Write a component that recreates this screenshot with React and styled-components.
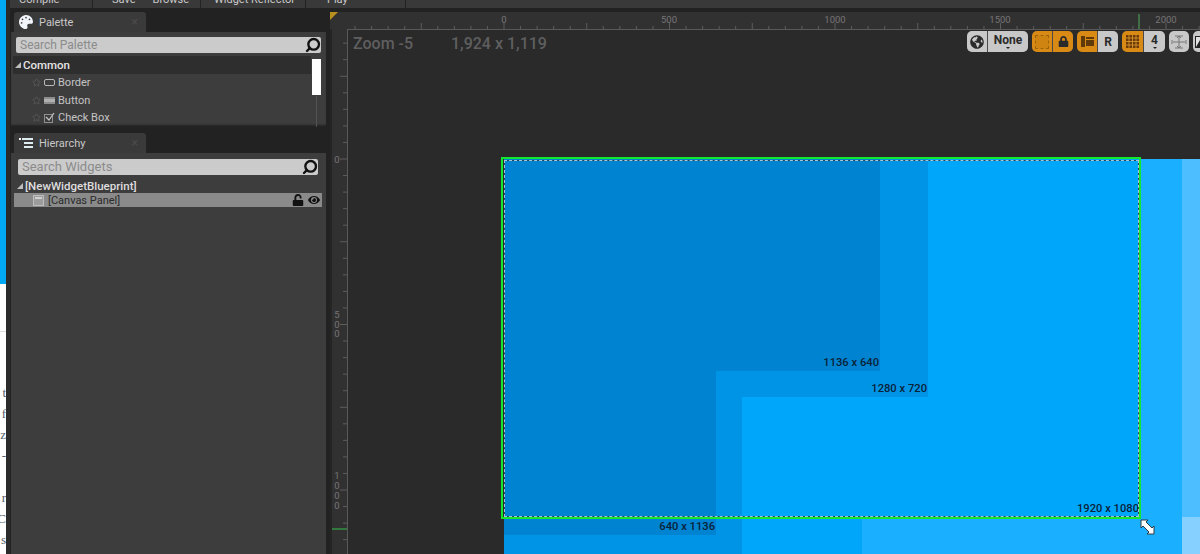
import React from 'react';
import styled, { createGlobalStyle } from 'styled-components';
import { FaGlobeAmericas, FaLock, FaUnlock, FaEye, FaPalette } from 'react-icons/fa';
import { Search, Star } from 'lucide-react';

const GlobalStyle = createGlobalStyle`
  html, body {
    margin: 0;
    height: 100%;
    background: #232223;
    overflow: hidden;
  }
  #root {
    height: 100%;
  }
`;

const Screen = styled.div`
  width: 1200px;
  height: 554px;
  display: flex;
  overflow: hidden;
  font-family: Roboto, "Liberation Sans", sans-serif;
`;

const Backdrop = styled.div`
  width: 6px;
  flex: none;
  display: flex;
  flex-direction: column;
  overflow: hidden;
  background: #fff;
`;

const BackdropTop = styled.div`
  height: 284px;
  flex: none;
  background: #00a9f4;
`;

const BackdropRule = styled.div`
  height: 1px;
  flex: none;
  margin-top: 47px;
  background: #dedede;
`;

const BackdropText = styled.div`
  padding-top: 54px;
  margin-left: -6px;
  display: flex;
  flex-direction: column;
  gap: 8px;
  font: 13px/13px "Liberation Serif", serif;
  color: #55606a;
  text-align: right;
  width: 12px;
`;

const Editor = styled.div`
  flex: 1;
  min-width: 0;
  display: flex;
  flex-direction: column;
  background: #232223;
  border-left: 4px solid #2b2b2b;
`;

const MenuBar = styled.div`
  height: 8px;
  flex: none;
  display: flex;
  overflow: hidden;
  background: #3a393a;
  margin-bottom: 4px;
`;

const MenuItem = styled.div`
  width: ${p => p.$w}px;
  flex: none;
  height: 14px;
  margin-top: -6px;
  display: flex;
  gap: ${p => p.$gap || 0}px;
  padding-left: ${p => p.$pad}px;
  box-sizing: border-box;
  border-right: 1px solid #242324;
  font-size: 11px;
  line-height: 11px;
  white-space: nowrap;
  color: #c9c9c9;
`;

const Workspace = styled.div`
  flex: 1;
  min-height: 0;
  display: flex;
`;

const Sidebar = styled.div`
  width: 320px;
  flex: none;
  display: flex;
  flex-direction: column;
  gap: 6px;
  padding-left: 1px;
  box-sizing: border-box;
`;

const Dock = styled.section`
  width: 315px;
  display: flex;
  flex-direction: column;
  flex: ${p => (p.$grow ? 1 : 'none')};
  min-height: 0;
`;

const Tab = styled.div`
  width: 132px;
  height: 20px;
  margin-left: 3px;
  flex: none;
  box-sizing: border-box;
  padding: 0 8px 0 5px;
  display: flex;
  align-items: center;
  gap: 6px;
  background: #3b3a3b;
  border-radius: 3px 3px 0 0;
  color: #c8c8c8;
  font-size: 11px;
`;

const TabClose = styled.span`
  margin-left: auto;
  color: #4c4b4c;
  font-size: 12px;
`;

const DockBody = styled.div`
  flex: ${p => (p.$grow ? 1 : 'none')};
  height: ${p => (p.$grow ? 'auto' : '95px')};
  min-height: 0;
  background: #3e3d3e;
  box-sizing: border-box;
  padding: ${p => p.$pad};
  box-shadow: inset 0 -3px 2px -1px ${p => (p.$grow ? 'transparent' : '#232223')};
`;

const SearchBox = styled.div`
  height: 16px;
  box-sizing: border-box;
  display: flex;
  align-items: center;
  justify-content: space-between;
  padding: 0 0 0 4px;
  margin: ${p => p.$margin};
  border-radius: 2px;
  background: #cbcbcb;
  color: #8b8b8b;
  font-size: ${p => p.$size}px;
`;

const SearchLabel = styled.span`
  padding-bottom: 1px;
`;

const SearchIcon = styled(Search)`
  width: 16px;
  height: 16px;
  color: #111;
  transform: scaleX(-1);
`;

const PaletteList = styled.div`
  position: relative;
  margin-top: 3px;
`;

const ScrollThumb = styled.div`
  position: absolute;
  top: 3px;
  left: 301px;
  width: 9px;
  height: 36px;
  background: #fff;
`;

const ScrollTrack = styled.div`
  position: absolute;
  top: 40px;
  left: 305px;
  bottom: 0;
  width: 1px;
  background: #545354;
`;

const CategoryRow = styled.div`
  width: 298px;
  height: 18px;
  margin-left: 2px;
  display: flex;
  align-items: center;
  gap: 2px;
  padding: 0 0 1px 2px;
  box-sizing: border-box;
  background: #2f2e2f;
  color: #e4e4e4;
  font-size: 11.5px;
  font-weight: 500;
`;

const Caret = styled.span`
  width: 0;
  height: 0;
  border-left: 6px solid transparent;
  border-bottom: 6px solid #bdbdbd;
`;

const WidgetRow = styled.div`
  height: 17.6px;
  padding-left: 21px;
  display: flex;
  align-items: center;
  gap: 3px;
  color: #c4c4c4;
  font-size: 11px;
`;

const FavStar = styled(Star)`
  width: 9px;
  height: 9px;
  color: #5e5d5e;
`;

const TreeRoot = styled.div`
  height: 14px;
  margin: 4px 0 0 6px;
  display: flex;
  align-items: center;
  gap: 2px;
  color: #dedede;
  font-size: 11.5px;
  font-weight: 500;
`;

const TreeRow = styled.div`
  height: 14px;
  margin: 0 4px 0 3px;
  padding: 0 2px 0 19px;
  display: flex;
  align-items: center;
  gap: 4px;
  background: #8a8a8a;
  color: #2b2b2b;
  font-size: 11px;
`;

const RowIcons = styled.span`
  margin-left: auto;
  display: flex;
  align-items: center;
  gap: 4px;
  color: #111;
  font-size: 12px;
`;

const Viewport = styled.div`
  flex: 1;
  min-width: 0;
  display: flex;
  flex-direction: column;
`;

const TopRuler = styled.svg`
  display: block;
  width: 100%;
  height: 17px;
  flex: none;
  background: #323132;
`;

const ViewportBody = styled.div`
  flex: 1;
  min-height: 0;
  display: flex;
`;

const SideRuler = styled.svg`
  display: block;
  width: 17px;
  height: 100%;
  flex: none;
  background: #323132;
  border-left: 2px solid #262526;
  box-sizing: border-box;
`;

const Canvas = styled.div`
  flex: 1;
  min-width: 0;
  position: relative;
  overflow: hidden;
  background: #2a2a2b;
  box-shadow: inset 1px 1px 0 #5a595a;
`;

const Zone = styled.div`
  position: absolute;
  left: 157px;
  top: 130px;
  width: ${p => p.$w};
  height: ${p => p.$h};
  background: ${p => p.$color};
`;

const ZoneLabel = styled.span`
  position: absolute;
  right: 1px;
  bottom: 1px;
  color: #0b2238;
  font-size: 11.2px;
  line-height: 14px;
  font-weight: 500;
  white-space: nowrap;
`;

const Selection = styled.div`
  position: absolute;
  left: 154px;
  top: 128px;
  width: 640px;
  height: 362px;
  box-sizing: border-box;
  border: 2px solid #14e82e;
  pointer-events: none;
`;

const DashFrame = styled.div`
  position: absolute;
  inset: 1px 0 0 1px;
  border: 1px solid #1e4660;

  &::after {
    content: '';
    position: absolute;
    inset: -1px;
    border: 1px dashed #a5c6d2;
  }
`;

const ResizeHandle = styled.svg`
  position: absolute;
  left: 793px;
  top: 490px;
  width: 17px;
  height: 17px;
`;

const Overlay = styled.div`
  position: absolute;
  top: 2px;
  left: 6px;
  right: -13px;
  display: flex;
  align-items: flex-start;
`;

const Readout = styled.div`
  width: ${p => p.$w}px;
  flex: none;
  padding-top: 3px;
  color: #5f5f5f;
  font-size: 16px;
  font-weight: 500;
  white-space: nowrap;
`;

const Toolbar = styled.div`
  margin-left: auto;
  display: flex;
  gap: 4px;
`;

const ToolGroup = styled.div`
  display: flex;
  gap: ${p => p.$gap || 1}px;
  border-radius: 5px;
  overflow: hidden;
  background: #4a4a4a;
`;

const ToolButton = styled.div`
  width: ${p => p.$w || 20}px;
  height: 21px;
  flex: none;
  display: flex;
  flex-direction: column;
  align-items: center;
  justify-content: center;
  background: ${p => (p.$on ? '#d88a14' : '#c8c8c8')};
  color: #2a2a2a;
  font-size: ${p => p.$size || 12}px;
  font-weight: 700;
  line-height: 12px;
`;

const DropCaret = styled.span`
  width: 0;
  height: 0;
  margin-top: 1px;
  border-left: 2px solid transparent;
  border-right: 2px solid transparent;
  border-top: 2px solid #222;
`;

const DashedSquare = styled.span`
  width: 12px;
  height: 12px;
  border: 1px dashed #9c640c;
  background: #cf8412;
`;

const RulerText = styled.text`
  fill: #767576;
  font-size: 9.5px;
  font-family: Roboto, sans-serif;
  text-anchor: middle;
`;

const zones = [
  { w: '100%', h: '100%', color: '#86d0ff' },
  { w: '100%', h: '358px', color: '#4dbeff' },
  { w: '678px', h: '100%', color: '#1ab0ff' },
  { w: '358px', h: '100%', color: '#00a6fa' },
  { w: '636px', h: '358px', color: '#00a6fa', label: '1920 x 1080' },
  { w: '238px', h: '100%', color: '#0094e6' },
  { w: '424px', h: '238px', color: '#0094e6', label: '1280 x 720' },
  { w: '212px', h: '376px', color: '#0083d0', label: '640 x 1136' },
  { w: '376px', h: '212px', color: '#0083d0', label: '1136 x 640' },
];

const TICK = 16.55;

const HorizontalTicks = () => {
  const ticks = [];
  for (let i = -9; i < 54; i++) {
    const x = 174 + i * TICK;
    const major = i % 5 === 0;
    ticks.push(<line key={i} x1={x} x2={x} y1={major ? 11 : 14} y2={17} stroke="#5e5d5e" />);
  }
  return ticks;
};

const VerticalTicks = () => {
  const ticks = [];
  for (let i = -7; i < 24; i++) {
    const y = 130 + i * TICK;
    const major = i % 5 === 0;
    ticks.push(<line key={i} x1={major ? 8 : 11} x2={15} y1={y} y2={y} stroke="#5e5d5e" />);
  }
  return ticks;
};

const sideLabels = [
  { y: 134, chars: '0' },
  { y: 289, chars: '5' },
  { y: 299, chars: '0' },
  { y: 308, chars: '0' },
  { y: 450, chars: '1' },
  { y: 460, chars: '0' },
  { y: 470, chars: '0' },
  { y: 480, chars: '0' },
];

const topLabels = [
  { x: 174, text: '0' },
  { x: 339, text: '500' },
  { x: 505, text: '1000' },
  { x: 670, text: '1500' },
  { x: 836, text: '2000' },
];

const HierarchyIcon = () => (
  <svg width="14" height="12" viewBox="0 0 14 12">
    <rect x="0" y="1" width="2" height="2" fill="#fff" />
    <rect x="3" y="1" width="11" height="2" fill="#dcecf0" />
    <rect x="5" y="5" width="9" height="2" fill="#dcecf0" />
    <rect x="5" y="9" width="9" height="2" fill="#dcecf0" />
  </svg>
);

const BorderIcon = () => (
  <svg width="11" height="7" viewBox="0 0 11 7">
    <rect x="0.5" y="0.5" width="10" height="6" rx="1.5" fill="none" stroke="#b8b8b8" />
  </svg>
);

const ButtonIcon = () => (
  <svg width="11" height="7" viewBox="0 0 11 7">
    <rect width="11" height="7" fill="#8d8d8d" />
    <rect y="2" width="11" height="3" fill="#b0b0b0" />
  </svg>
);

const CheckIcon = () => (
  <svg width="11" height="11" viewBox="0 0 11 11">
    <rect x="0.5" y="2.5" width="8" height="8" fill="none" stroke="#8f8f8f" />
    <path d="M2 5 L5 8 L10 1" fill="none" stroke="#c4c4c4" strokeWidth="1.2" />
  </svg>
);

const CanvasPanelIcon = () => (
  <svg width="11" height="11" viewBox="0 0 11 11">
    <rect x="0.5" y="0.5" width="10" height="10" fill="#9c9c9c" stroke="#bdbdbd" />
    <rect x="2" y="2" width="7" height="2" fill="#d0d0d0" />
  </svg>
);

const TransformIcon = () => (
  <svg width="16" height="14" viewBox="0 0 16 14">
    <path d="M8 1 V13 M2 7 H14 M4 1 H12 M4 13 H12 M1 5 V9 M15 5 V9 M6 3 L8 1 L10 3 M6 11 L8 13 L10 11" fill="none" stroke="#777" strokeWidth="1" />
  </svg>
);

const ImageIcon = () => (
  <svg width="16" height="12" viewBox="0 0 16 12">
    <rect x="0.5" y="0.5" width="15" height="11" fill="#e2e2e2" stroke="#222" />
    <path d="M1 11 L5 4 L8 8 L11 5 L15 10 V11 Z" fill="#222" />
  </svg>
);

const GridIcon = () => (
  <svg width="13" height="13" viewBox="0 0 13 13">
    <rect width="13" height="13" fill="#6d3a05" />
    <path d="M3 0 V13 M6.5 0 V13 M10 0 V13 M0 3 H13 M0 6.5 H13 M0 10 H13" stroke="#e09a30" strokeWidth="0.8" />
  </svg>
);

const LayoutIcon = () => (
  <svg width="13" height="11" viewBox="0 0 13 11">
    <rect width="4" height="11" fill="#5f3a08" />
    <rect x="5" y="1" width="8" height="2" fill="#5f3a08" />
    <rect x="5" y="4" width="8" height="6" fill="#5f3a08" />
  </svg>
);

const App = () => (
  <Screen>
    <GlobalStyle />
    <Backdrop>
      <BackdropTop />
      <BackdropRule />
      <BackdropText>
        <span>t</span>
        <span>f</span>
        <span>z</span>
        <span>-</span>
        <span>&nbsp;</span>
        <span>r</span>
        <span>C</span>
        <span>s</span>
      </BackdropText>
    </Backdrop>
    <Editor>
      <MenuBar>
        <MenuItem $w={83} $pad={9}>Compile</MenuItem>
        <MenuItem $w={108} $pad={19} $gap={17}><span>Save</span><span>Browse</span></MenuItem>
        <MenuItem $w={105} $pad={13}>Widget Reflector</MenuItem>
        <MenuItem $w={100} $pad={21}>Play</MenuItem>
      </MenuBar>
      <Workspace>
        <Sidebar>
          <Dock>
            <Tab>
              <FaPalette size={14} color="#f2f5fa" />
              Palette
              <TabClose>×</TabClose>
            </Tab>
            <DockBody $pad="5px 0 0 0">
              <SearchBox $size={12} $margin="0 5px 0 5px">
                <SearchLabel>Search Palette</SearchLabel>
                <SearchIcon strokeWidth={3.5} />
              </SearchBox>
              <PaletteList>
                <ScrollThumb />
                <ScrollTrack />
                <CategoryRow>
                  <Caret />
                  Common
                </CategoryRow>
                <WidgetRow><FavStar /><BorderIcon />Border</WidgetRow>
                <WidgetRow><FavStar /><ButtonIcon />Button</WidgetRow>
                <WidgetRow><FavStar /><CheckIcon />Check Box</WidgetRow>
              </PaletteList>
            </DockBody>
          </Dock>
          <Dock $grow>
            <Tab>
              <HierarchyIcon />
              Hierarchy
              <TabClose>×</TabClose>
            </Tab>
            <DockBody $grow $pad="6px 0 0 0">
              <SearchBox $size={13} $margin="0 8px 0 7px">
                <SearchLabel>Search Widgets</SearchLabel>
                <SearchIcon strokeWidth={3.5} />
              </SearchBox>
              <TreeRoot>
                <Caret />
                [NewWidgetBlueprint]
              </TreeRoot>
              <TreeRow>
                <CanvasPanelIcon />
                [Canvas Panel]
                <RowIcons><FaUnlock /><FaEye /></RowIcons>
              </TreeRow>
            </DockBody>
          </Dock>
        </Sidebar>
        <Viewport>
          <TopRuler>
            <path d="M0 0 H8 L0 8 Z" fill="#b8901f" />
            <HorizontalTicks />
            {topLabels.map(l => (
              <RulerText key={l.text} x={l.x} y={11}>{l.text}</RulerText>
            ))}
            <line x1={809} x2={809} y1={2} y2={17} stroke="#4fae5c" />
          </TopRuler>
          <ViewportBody>
            <SideRuler>
              <VerticalTicks />
              {sideLabels.map(l => (
                <RulerText key={l.y} x={5} y={l.y}>{l.chars}</RulerText>
              ))}
              <line x1={0} x2={15} y1={500} y2={500} stroke="#35c24a" />
            </SideRuler>
            <Canvas>
              {zones.map(z => (
                <Zone key={z.w + z.h} $w={z.w} $h={z.h} $color={z.color}>
                  {z.label && <ZoneLabel>{z.label}</ZoneLabel>}
                </Zone>
              ))}
              <Selection>
                <DashFrame />
              </Selection>
              <ResizeHandle viewBox="0 0 17 17">
                <path d="M1 1 H8 L6 3 L12 9 L14 7 V15 H7 L9 13 L3 7 L1 9 Z" fill="#fff" stroke="#2a3a44" strokeWidth="1" />
              </ResizeHandle>
              <Overlay>
                <Readout $w={98}>Zoom -5</Readout>
                <Readout $w={200}>1,924 x 1,119</Readout>
                <Toolbar>
                  <ToolGroup>
                    <ToolButton><FaGlobeAmericas size={14} /></ToolButton>
                    <ToolButton $w={40} $size={12}>None<DropCaret /></ToolButton>
                  </ToolGroup>
                  <ToolGroup>
                    <ToolButton $on><DashedSquare /></ToolButton>
                    <ToolButton $on><FaLock size={11} /></ToolButton>
                  </ToolGroup>
                  <ToolGroup $gap={0}>
                    <ToolButton $on><LayoutIcon /></ToolButton>
                    <ToolButton $size={12}>R</ToolButton>
                  </ToolGroup>
                  <ToolGroup>
                    <ToolButton $on $w={21}><GridIcon /></ToolButton>
                    <ToolButton $w={21} $size={12}>4<DropCaret /></ToolButton>
                  </ToolGroup>
                  <ToolGroup><ToolButton><TransformIcon /></ToolButton></ToolGroup>
                  <ToolGroup><ToolButton><ImageIcon /></ToolButton></ToolGroup>
                </Toolbar>
              </Overlay>
            </Canvas>
          </ViewportBody>
        </Viewport>
      </Workspace>
    </Editor>
  </Screen>
);

export default App;
